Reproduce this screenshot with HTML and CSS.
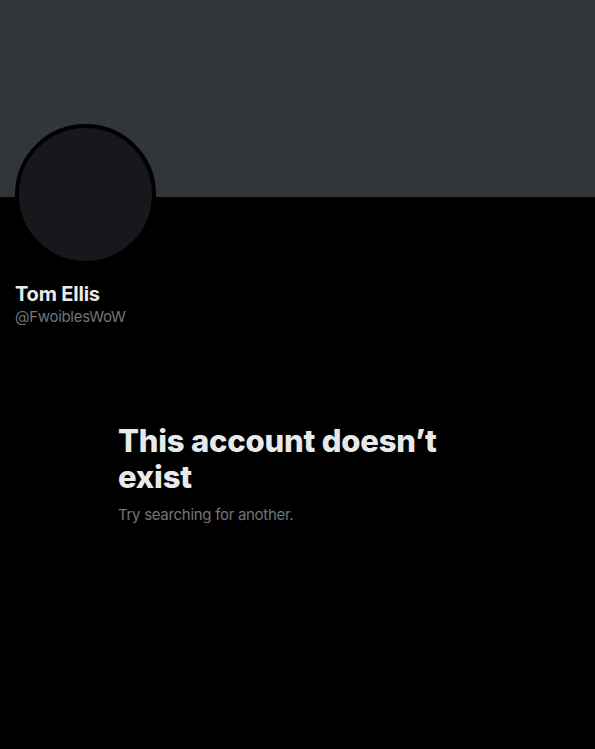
FILE: index.html
```html
<!DOCTYPE html>
<html>
<head>
<meta charset="utf-8">
<link rel="stylesheet" href="styles.css">
</head>
<body>
<div class="banner"></div>
<div class="profile">
  <div class="avatar"></div>
  <div class="name">Tom Ellis</div>
  <div class="handle">@FwoiblesWoW</div>
</div>
<div class="empty">
  <h1 class="empty-title">This account doesn’t exist</h1>
  <p class="empty-sub">Try searching for another.</p>
</div>
</body>
</html>
```
FILE: styles.css
```css
html, body {
  margin: 0;
  padding: 0;
  background: #000;
  height: 100%;
}
body {
  font-family: Inter, "Noto Sans", sans-serif;
  color: #e7e9ea;
  overflow: hidden;
}
.banner {
  height: 197px;
  background: #333639;
}
.profile {
  padding: 0 15px;
}
.avatar {
  width: 133px;
  height: 133px;
  border: 4px solid #000;
  border-radius: 50%;
  background: #16181c;
  margin-top: -73px;
}
.name {
  margin-top: 17px;
  font-size: 20px;
  font-weight: 700;
  line-height: 24px;
  letter-spacing: -0.2px;
  color: #e7e9ea;
}
.handle {
  margin-top: 1px;
  font-size: 15px;
  line-height: 20px;
  letter-spacing: -0.3px;
  color: #71767b;
}
.empty {
  margin: 96px 0 0 118px;
  width: 340px;
}
.empty-title {
  margin: 0;
  font-size: 31px;
  font-weight: 800;
  line-height: 36px;
  letter-spacing: -0.2px;
  color: #e7e9ea;
}
.empty-sub {
  margin: 10px 0 0;
  font-size: 15px;
  line-height: 20px;
  letter-spacing: -0.3px;
  color: #71767b;
}
```
